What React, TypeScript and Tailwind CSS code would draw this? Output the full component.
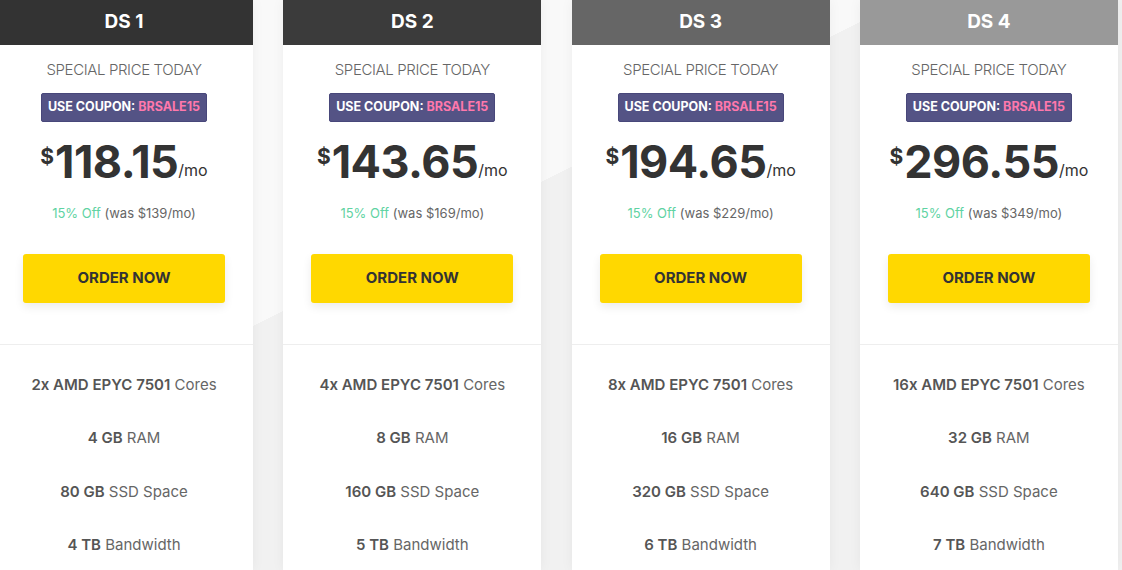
const plans = [
  { name: 'DS 1', head: 'bg-[#333333]', price: '118.15', was: '139', cores: '2x', ram: '4', ssd: '80', bw: '4' },
  { name: 'DS 2', head: 'bg-[#3b3b3b]', price: '143.65', was: '169', cores: '4x', ram: '8', ssd: '160', bw: '5' },
  { name: 'DS 3', head: 'bg-[#666666]', price: '194.65', was: '229', cores: '8x', ram: '16', ssd: '320', bw: '6' },
  { name: 'DS 4', head: 'bg-[#999999]', price: '296.55', was: '349', cores: '16x', ram: '32', ssd: '640', bw: '7' },
];

const Feature = ({ bold, rest }: { bold: string; rest: string }) => (
  <div className="h-[53.5px] flex items-center justify-center text-[15px] text-[#666]">
    <span className="font-semibold text-[#555]">{bold}</span>&nbsp;{rest}
  </div>
);

export default function App() {
  return (
    <div
      className="h-[570px] overflow-hidden bg-[linear-gradient(153.4deg,#f9f9f9_40%,#f1f1f1_40%)]"
      style={{ fontFamily: 'Inter, "Open Sans", sans-serif' }}
    >
      <div className="flex gap-[30.3px] ml-[-5px]">
        {plans.map((p) => (
          <div key={p.name} className="w-[258px] h-[570px] shrink-0 bg-white shadow-[0_0_12px_rgba(0,0,0,0.05)]">
            <div className={`${p.head} h-[45px] flex items-center justify-center text-white font-bold text-[19px]`}>
              {p.name}
            </div>
            <div className="flex flex-col items-center">
              <div className="mt-[14px] text-[15px] text-[#666] font-light tracking-tight">SPECIAL PRICE TODAY</div>
              <div className="mt-[11px] h-[29px] px-[6px] flex items-center bg-[#545385] border border-[#48477a] rounded-[2px] text-[12.5px] font-bold text-white">
                USE COUPON:&nbsp;<span className="text-[#ff78ac]">BRSALE15</span>
              </div>
              <div className="mt-[12px] flex items-start text-[#333]">
                <span className="text-[21px] font-bold mt-[7px] mr-[1px]">$</span>
                <span className="text-[45px] font-bold leading-[56px] tracking-[-0.5px]">{p.price}</span>
                <span className="text-[16px] mt-[24px]">/mo</span>
              </div>
              <div className="mt-[14px] text-[13px] text-[#666]">
                <span className="text-[#5fd3a3]">15% Off</span> (was ${p.was}/mo)
              </div>
              <button className="mt-[31px] w-[202px] h-[49px] rounded-[3px] bg-[#ffd800] text-[#333] font-bold text-[15px] shadow-[0_4px_10px_rgba(0,0,0,0.08)]">
                ORDER NOW
              </button>
            </div>
            <div className="mt-[41px] border-t border-[#eeeeee] pt-[13px]">
              <Feature bold={`${p.cores} AMD EPYC 7501`} rest="Cores" />
              <Feature bold={`${p.ram} GB`} rest="RAM" />
              <Feature bold={`${p.ssd} GB`} rest="SSD Space" />
              <Feature bold={`${p.bw} TB`} rest="Bandwidth" />
            </div>
          </div>
        ))}
      </div>
    </div>
  );
}
